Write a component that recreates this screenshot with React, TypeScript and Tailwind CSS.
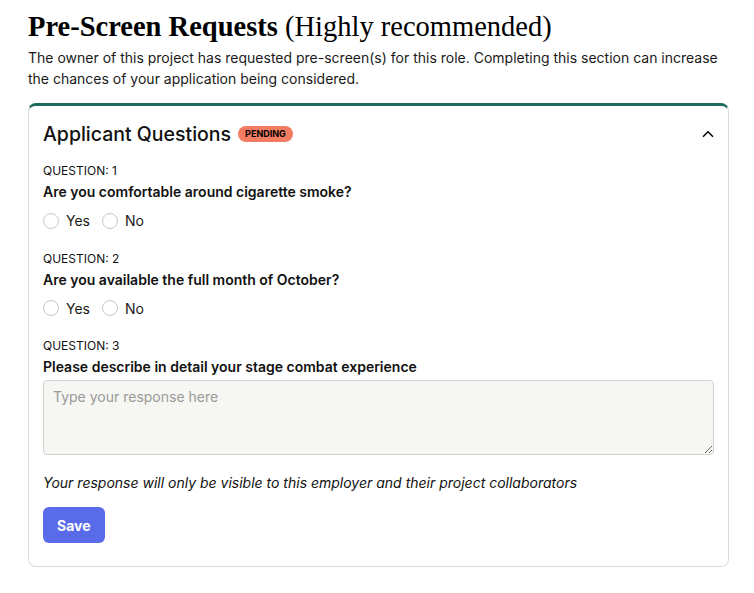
import { ChevronUp } from "lucide-react";

const questions = [
  { n: 1, text: "Are you comfortable around cigarette smoke?", kind: "yesno" },
  { n: 2, text: "Are you available the full month of October?", kind: "yesno" },
  { n: 3, text: "Please describe in detail your stage combat experience", kind: "text" },
];

function Radio({ label }: { label: string }) {
  return (
    <label className="flex items-center gap-[7px]">
      <span className="h-[16px] w-[16px] rounded-full border border-[#c8c8c8] bg-white" />
      <span className="text-[14px] text-[#1a1a1a]">{label}</span>
    </label>
  );
}

export default function App() {
  return (
    <main className="min-h-screen bg-white text-[#111] font-['Inter',sans-serif]">
      <div className="w-[701px] ml-[28px] pt-[11px]">
        <h1 className="text-[28.5px] leading-[32px] text-black font-['Liberation_Serif',serif]">
          <span className="font-bold">Pre-Screen Requests</span>{" "}
          <span className="font-normal">(Highly recommended)</span>
        </h1>
        <p className="mt-[4px] text-[14px] leading-[21px] text-[#1a1a1a]">
          The owner of this project has requested pre-screen(s) for this role. Completing this section can increase
          the chances of your application being considered.
        </p>

        <section className="mt-[14px] rounded-[8px] border border-[#dadada] border-t-[3px] border-t-[#1d6b5c] px-[14px] pt-[15px] pb-[23px]">
          <div className="flex items-center justify-between">
            <div className="flex items-center gap-[7px]">
              <h2 className="text-[19.5px] leading-[26px] font-medium text-[#111]">Applicant Questions</h2>
              <span className="rounded-full bg-[#f47c62] px-[7px] py-[2px] text-[9px] font-bold leading-[12px] text-black">
                PENDING
              </span>
            </div>
            <ChevronUp className="h-[18px] w-[18px] text-black mr-[-3px]" strokeWidth={2} />
          </div>

          <div className="mt-[16px] flex flex-col gap-[19.5px]">
            {questions.map((q) => (
              <div key={q.n}>
                <div className="text-[12px] leading-[16px] text-[#111]">QUESTION: {q.n}</div>
                <div className="mt-[3px] text-[14px] font-semibold leading-[20px] text-[#111]">{q.text}</div>
                {q.kind === "yesno" ? (
                  <div className="mt-[8px] flex items-center gap-[12px]">
                    <Radio label="Yes" />
                    <Radio label="No" />
                  </div>
                ) : (
                  <textarea
                    placeholder="Type your response here"
                    className="mt-[3px] block h-[75px] w-full rounded-[4px] border border-[#d2d2d2] bg-[#f6f6f3] px-[9px] py-[5px] text-[14px] placeholder:text-[#9a9a9a]"
                  />
                )}
              </div>
            ))}
          </div>

          <p className="mt-[18px] text-[14px] italic leading-[20px] text-[#111]">
            Your response will only be visible to this employer and their project collaborators
          </p>

          <button className="mt-[14px] h-[36px] rounded-[6px] bg-[#5a6bea] px-[14px] text-[14px] font-bold text-white">
            Save
          </button>
        </section>
      </div>
    </main>
  );
}
